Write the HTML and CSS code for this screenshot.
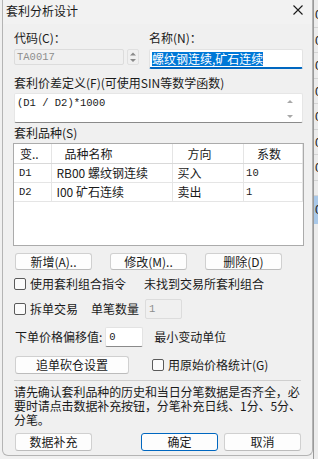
FILE: index.html
```html
<!DOCTYPE html>
<html lang="zh">
<head>
  <meta charset="utf-8">
  <meta name="viewport" content="width=device-width, initial-scale=1.0">
  <link rel="stylesheet" href="styles.css">
</head>
<body>
  <div class="screen">
    <div class="dlg">
      <div class="titlebar">
        <span class="title">套利分析设计</span>
        <svg class="close" width="10" height="10" viewBox="0 0 10 10"><path d="M0.5 0.5L9.5 9.5M9.5 0.5L0.5 9.5" stroke="#1a1a1a" stroke-width="1.1"/></svg>
      </div>

      <div class="content">
        <!-- 代码 / 名称 -->
        <div class="row-top">
          <div class="col-code">
            <div class="lbl">代码(C)：</div>
            <div class="code-line">
              <div class="field disabled code mono">TA0017</div>
              <div class="spin">
                <svg width="12" height="16" viewBox="0 0 12 16"><path d="M3 6.5L6 3.5L9 6.5Z M3 10L6 13L9 10Z" fill="#8a8a8a"/></svg>
              </div>
            </div>
          </div>
          <div class="col-name">
            <div class="lbl">名称(N)：</div>
            <div class="field name"><span class="sel">螺纹钢连续,矿石连续</span></div>
          </div>
        </div>

        <div class="lbl formula-lbl">套利价差定义(F)(可使用SIN等数学函数)</div>
        <div class="memo">
          <span class="mono">(D1 / D2)*1000</span>
          <svg class="memo-scroll" width="8" height="22" viewBox="0 0 8 22"><path d="M1 5L4 2L7 5Z M1 17L4 20L7 17Z" fill="#a8a8a8"/></svg>
        </div>

        <div class="lbl list-lbl">套利品种(S)</div>
        <div class="list">
          <table class="grid">
            <thead>
              <tr><th>变..</th><th>品种名称</th><th>方向</th><th>系数</th><th class="fill"></th></tr>
            </thead>
            <tbody>
              <tr><td class="mono">D1</td><td>RB00 螺纹钢连续</td><td>买入</td><td class="mono">10</td><td class="fill"></td></tr>
              <tr><td class="mono">D2</td><td>I00 矿石连续</td><td>卖出</td><td class="mono">1</td><td class="fill"></td></tr>
            </tbody>
          </table>
        </div>

        <div class="btn-row">
          <button class="btn w77">新增(A)..</button>
          <button class="btn w77">修改(M)..</button>
          <button class="btn w77">删除(D)</button>
        </div>

        <div class="line line-1">
          <span class="check"></span><span class="check-text">使用套利组合指令</span>
          <span class="note">未找到交易所套利组合</span>
        </div>

        <div class="line line-2">
          <span class="check"></span><span class="check-text">拆单交易</span>
          <span class="qty-lbl">单笔数量</span>
          <div class="field disabled qty mono">1</div>
        </div>

        <div class="line line-3">
          <span class="offset-lbl">下单价格偏移值:</span>
          <div class="field offset mono">0</div>
          <span class="unit">最小变动单位</span>
        </div>

        <div class="line line-4">
          <button class="btn chase">追单砍仓设置</button>
          <span class="check"></span><span class="check-text">用原始价格统计(G)</span>
        </div>

        <div class="sep"></div>

        <p class="hint">请先确认套利品种的历史和当日分笔数据是否齐全，必<br>要时请点击数据补充按钮，分笔补充日线、1分、5分、<br>分笔。</p>

        <div class="foot">
          <button class="btn w77">数据补充</button>
          <button class="btn w77 ok">确定</button>
          <button class="btn w77 cancel">取消</button>
        </div>
      </div>
    </div>

    <!-- 后面窗口的一角 -->
    <div class="behind">
      <div class="b-row">0</div>
      <div class="b-row">0</div>
      <div class="b-row">0</div>
      <div class="b-row">0</div>
      <div class="b-row">0</div>
      <div class="b-row">0</div>
      <div class="b-row">0</div>
      <div class="b-row empty"></div>
      <div class="b-row active">0</div>
    </div>
  </div>
</body>
</html>
```

FILE: styles.css
```css
:root {
  --bg: #f0f0f0;
  --border: #d6d6d6;
  --text: #1a1a1a;
  --muted: #6d6d6d;
  --blue: #0067c0;
  --sel: #0078d7;
}
body {
  margin: 0;
  padding: 0;
  background: var(--bg);
  font-family: "Noto Sans CJK SC", sans-serif;
  font-size: 12px;
  line-height: 14px;
  color: var(--text);
}
.screen {
  display: flex;
  width: 318px;
  height: 459px;
  overflow: hidden;
}
.dlg {
  box-sizing: border-box;
  margin-left: 2px;
  width: 311px;
  height: 456px;
  background: var(--bg);
  border: 1px solid #b4b4b4;
  border-top: none;
  border-radius: 0 0 6px 6px;
  flex-shrink: 0;
}
.mono {
  font-family: "Liberation Mono", "Noto Sans CJK SC", monospace;
  font-size: 10.5px;
}
.titlebar {
  height: 24px;
  display: flex;
  align-items: center;
  justify-content: space-between;
  padding: 0 9px 3px 3px;
  box-sizing: border-box;
  background: #f2f2f2;
}
.title {
  font-size: 12px;
  line-height: 14px;
}
.close {
  display: block;
  margin-top: -1px;
}
.content {
  padding: 0 9px 0 11px;
}
.lbl {
  height: 14px;
}

/* 代码 / 名称 */
.row-top {
  display: flex;
  gap: 10px;
  padding-top: 7px;
}
.col-code {
  width: 125px;
}
.col-name {
  flex: 1;
}
.row-top .lbl {
  margin-bottom: 4px;
}
.code-line {
  display: flex;
  gap: 3px;
}
.field {
  box-sizing: border-box;
  background: #fff;
  border: 1px solid #e3e3e3;
  border-bottom-color: #8a8a8a;
  border-radius: 2px;
  display: flex;
  align-items: center;
  padding-left: 2px;
}
.field.disabled {
  background: var(--bg);
  border-color: #dcdcdc;
  color: #8d8d8d;
}
.code {
  width: 111px;
  height: 16px;
  color: var(--muted);
}
.spin {
  box-sizing: border-box;
  width: 12px;
  height: 16px;
  border: 1px solid #e0e0e0;
  border-radius: 2px;
}
.spin svg {
  display: block;
  margin: -1px;
}
.name {
  height: 20px;
  border-bottom: 2px solid var(--blue);
  padding-top: 1px;
}
.sel {
  background: var(--sel);
  color: #fff;
  line-height: 14px;
}

/* 价差定义 */
.formula-lbl {
  margin-top: 7px;
}
.memo {
  box-sizing: border-box;
  margin-top: 3px;
  height: 30px;
  background: #fff;
  border: 1px solid #e6e6e6;
  border-bottom-color: #8a8a8a;
  border-radius: 2px;
  display: flex;
  justify-content: space-between;
  padding: 2px 8px 0 2px;
}
.memo-scroll {
  margin-top: 2px;
}

/* 品种列表 */
.list-lbl {
  margin-top: 3px;
}
.list {
  box-sizing: border-box;
  margin-top: 3px;
  margin-left: -1px;
  width: 291px;
  height: 103px;
  background: #fff;
  border: 1px solid #ababab;
}
.grid {
  border-collapse: collapse;
  width: 289px;
}
.grid th {
  height: 19px;
  padding: 0;
  font-weight: normal;
  text-align: left;
  border-right: 1px solid #e5e5e5;
  border-bottom: 1px solid #d9d9d9;
}
.grid td {
  height: 18px;
  padding: 0;
  border-right: 1px solid #e5e5e5;
  border-bottom: 1px solid #e5e5e5;
}
.grid th:nth-child(1) { width: 33px; padding-left: 6px; }
.grid th:nth-child(2) { width: 118px; padding-left: 12px; }
.grid th:nth-child(3) { width: 61px; padding-left: 15px; }
.grid th:nth-child(4) { width: 49px; padding-left: 13px; }
.grid td:nth-child(1) { padding-left: 5px; }
.grid td:nth-child(2) { padding-left: 4px; }
.grid td:nth-child(3) { padding-left: 5px; }
.grid td:nth-child(4) { padding-left: 2px; }
.grid th.fill {
  border-right: none;
}
.grid td.fill {
  border: none;
}

/* 按钮 */
.btn {
  box-sizing: border-box;
  font-family: "Noto Sans CJK SC", sans-serif;
  font-size: 12px;
  line-height: 14px;
  color: var(--text);
  background: #fdfdfd;
  border: 1px solid #d0d0d0;
  border-bottom-color: #bcbcbc;
  border-radius: 3px;
  padding: 0;
  height: 18px;
}
.w77 {
  width: 77px;
}
.btn-row {
  display: flex;
  gap: 18px;
  margin-top: 7px;
  padding-left: 1px;
}
.btn-row .btn {
  height: 17px;
}

/* 选项行 */
.line {
  display: flex;
  align-items: center;
}
.check {
  box-sizing: border-box;
  width: 12px;
  height: 12px;
  border: 1px solid #5a5a5a;
  border-radius: 2px;
  background: #fbfbfb;
  flex-shrink: 0;
}
.check-text {
  margin-left: 4px;
}
.line-1 {
  height: 16px;
  margin-top: 6px;
}
.note {
  margin-left: 18px;
}
.line-2 {
  height: 20px;
  margin-top: 7px;
}
.qty-lbl {
  margin-left: 13px;
}
.qty {
  width: 37px;
  height: 20px;
  margin-left: 6px;
  padding-left: 3px;
  color: #a0a0a0;
}
.line-3 {
  height: 20px;
  margin-top: 8px;
  padding-left: 1px;
}
.offset {
  width: 38px;
  height: 20px;
  margin-left: 3px;
  padding-left: 3px;
}
.unit {
  margin-left: 11px;
}
.line-4 {
  height: 18px;
  margin-top: 9px;
  padding-left: 1px;
}
.chase {
  width: 114px;
  margin-right: 23px;
}
.sep {
  height: 1px;
  background: #cfcfcf;
  margin-top: 6px;
  width: 287px;
}
.hint {
  margin: 4px 0 0;
  line-height: 14px;
  letter-spacing: -0.1px;
}
.foot {
  display: flex;
  margin-top: 6px;
  padding-left: 1px;
}
.ok {
  margin-left: 49px;
  border-color: var(--blue);
}
.cancel {
  margin-left: 6px;
}

/* 后面窗口 */
.behind {
  flex: 1;
  background: #ececec;
  border-left: 1px solid #9a9a9a;
  overflow: hidden;
  padding-top: 2px;
}
.b-row {
  box-sizing: border-box;
  height: 25.5px;
  border-bottom: 1px solid #d4d4d4;
  padding-left: 1px;
  font-family: "Liberation Sans", sans-serif;
  font-size: 13px;
  line-height: 25px;
  color: #222;
}
.b-row.empty {
  height: 15px;
}
.b-row.active {
  height: 28px;
  background: #a9c8e8;
  border-bottom: none;
  line-height: 27px;
}
```
